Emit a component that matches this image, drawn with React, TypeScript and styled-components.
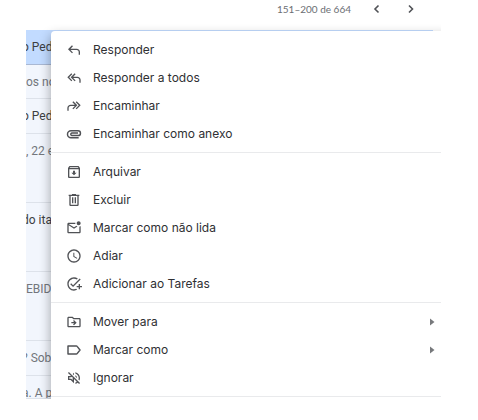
import React from "react";
import styled, { createGlobalStyle } from "styled-components";
import {
  MdAddTask,
  MdOutlineArchive,
  MdOutlineDriveFileMove,
  MdOutlineMarkEmailUnread,
  MdOutlineVolumeOff,
  MdSchedule,
} from "react-icons/md";

const Global = createGlobalStyle`
  * { box-sizing: border-box; }
  body { margin: 0; background: #fff; }
`;

const Page = styled.main`
  padding: 0 37px 21px 26px;
  font-family: Roboto, "Liberation Sans", sans-serif;
`;

const Viewport = styled.div`
  overflow: hidden;
`;

const Toolbar = styled.header`
  display: flex;
  align-items: center;
  justify-content: flex-end;
  height: 30px;
  padding: 0 24px 12px 0;
`;

const PageCount = styled.span`
  margin-right: 20px;
  font-family: Lato, "Liberation Sans", sans-serif;
  font-size: 10px;
  line-height: 16px;
  color: #6b6e73;
`;

const PagerButton = styled.button`
  display: flex;
  padding: 0;
  margin-left: 22px;
  border: 0;
  background: none;
  color: #505256;

  &:first-of-type {
    margin-left: 0;
  }
`;

const Content = styled.div`
  position: relative;
`;

const MailList = styled.ul`
  margin: 0;
  padding: 0;
  list-style: none;
`;

const MailRow = styled.li<{ $height: number; $selected?: boolean; $unread?: boolean }>`
  height: ${(p) => p.$height}px;
  margin-right: 8px;
  overflow: hidden;
  border-bottom: 1px solid ${(p) => (p.$selected ? "#a9b8d3" : "#dde2ea")};
  background: ${(p) => (p.$selected ? "#c2dbff" : "#f2f6fd")};
  color: ${(p) => (p.$unread ? "#3c3e42" : "#73767c")};
  font-size: 12px;
  line-height: 35px;
  white-space: nowrap;
`;

const Subject = styled.span<{ $scrolled?: boolean }>`
  display: block;
  margin-left: ${(p) => (p.$scrolled ? "-4px" : "0")};
`;

const Menu = styled.div`
  position: absolute;
  top: 1px;
  right: -8px;
  bottom: -8px;
  left: 25px;
  border-radius: 4px;
  background: #fff;
  box-shadow: 0 5px 11px 1px rgba(0, 0, 0, 0.3);
`;

const MenuGroup = styled.div`
  padding: 5px 0 4px;
  border-bottom: 1px solid #e9eaec;
`;

const MenuItem = styled.button`
  display: flex;
  align-items: center;
  width: 100%;
  height: 28px;
  padding: 0 11px 0 15px;
  border: 0;
  background: none;
  color: #2f3033;
  font-family: Inter, "Liberation Sans", sans-serif;
  font-size: 12px;
  line-height: 16px;
  text-align: left;

  > svg:first-child {
    flex: none;
    margin-right: 11px;
    color: #505256;
  }
`;

const ItemLabel = styled.span`
  flex: 1;
`;

const ICON = 16;

const Symbol = ({ d, flip }: { d: string; flip?: boolean }) => (
  <svg width={ICON} height={ICON} viewBox="0 -960 960 960" fill="currentColor" aria-hidden="true">
    <path d={d} transform={flip ? "translate(960 0) scale(-1 1)" : undefined} />
  </svg>
);

const REPLY =
  "M760-200v-160q0-50-35-85t-85-35H273l144 144-57 56-240-240 240-240 57 56-144 144h367q83 0 141.5 58.5T840-360v160h-80Z";
const REPLY_ALL =
  "M320-280 80-520l240-240 57 56-184 184 184 184-57 56Zm480 80v-160q0-50-35-85t-85-35H433l144 144-57 56-240-240 240-240 57 56-144 144h247q83 0 141.5 58.5T880-360v160h-80Z";

const LineIcon = ({ d }: { d: string }) => (
  <svg
    width={ICON}
    height={ICON}
    viewBox="0 0 24 24"
    fill="none"
    stroke="currentColor"
    strokeWidth="2.2"
    strokeLinejoin="round"
    aria-hidden="true"
  >
    <path d={d} />
  </svg>
);

const PAPERCLIP = "M19 17.5H7.5a5.25 5.25 0 0 1 0-10.5H18a3.7 3.7 0 0 1 0 7.4H8.7a2 2 0 0 1 0-3.9H18";
const LABEL = "M3 6h12.5a1.5 1.5 0 0 1 1.2.6L21 12l-4.3 5.4a1.5 1.5 0 0 1-1.2.6H3z";

const TrashIcon = () => (
  <svg width={ICON} height={ICON} viewBox="0 0 24 24" fill="currentColor" aria-hidden="true">
    <path d="M15 4V3H9v1H4v2h1v13c0 1.1.9 2 2 2h10c1.1 0 2-.9 2-2V6h1V4h-5zm2 15H7V6h10v13zM9 8h2v9H9V8zm4 0h2v9h-2V8z" />
  </svg>
);

const Chevron = ({ d }: { d: string }) => (
  <svg width="12" height="12" viewBox="0 0 12 12" fill="none" stroke="currentColor" strokeWidth="1.6" aria-hidden="true">
    <path d={d} />
  </svg>
);

const SubmenuArrow = () => (
  <svg width="12" height="12" viewBox="0 0 12 12" fill="#77797c" aria-hidden="true">
    <path d="M4 2.5v7L8.5 6z" />
  </svg>
);

type Item = { label: string; icon: React.ReactNode; submenu?: boolean };

const groups: Item[][] = [
  [
    { label: "Responder", icon: <Symbol d={REPLY} /> },
    { label: "Responder a todos", icon: <Symbol d={REPLY_ALL} /> },
    { label: "Encaminhar", icon: <Symbol d={REPLY_ALL} flip /> },
    { label: "Encaminhar como anexo", icon: <LineIcon d={PAPERCLIP} /> },
  ],
  [
    { label: "Arquivar", icon: <MdOutlineArchive size={ICON} /> },
    { label: "Excluir", icon: <TrashIcon /> },
    { label: "Marcar como não lida", icon: <MdOutlineMarkEmailUnread size={ICON} /> },
    { label: "Adiar", icon: <MdSchedule size={ICON} /> },
    { label: "Adicionar ao Tarefas", icon: <MdAddTask size={ICON} /> },
  ],
  [
    { label: "Mover para", icon: <MdOutlineDriveFileMove size={ICON} />, submenu: true },
    { label: "Marcar como", icon: <LineIcon d={LABEL} />, submenu: true },
    { label: "Ignorar", icon: <MdOutlineVolumeOff size={ICON} /> },
  ],
];

const mails = [
  { text: "o Ped", height: 35, scrolled: true, selected: true, unread: true },
  { text: "os no", height: 34 },
  { text: "o Ped", height: 35, scrolled: true, unread: true },
  { text: ", 22 e", height: 69 },
  { text: "do ita", height: 69, scrolled: true, unread: true },
  { text: "EBID", height: 69 },
  { text: "? Sob", height: 35, scrolled: true },
  { text: "a. A p", height: 23, scrolled: true },
];

export default function App() {
  return (
    <Page>
      <Global />
      <Viewport>
        <Toolbar>
          <PageCount>151–200 de 664</PageCount>
          <PagerButton aria-label="Mais recentes">
            <Chevron d="M7.5 2.5 4 6l3.5 3.5" />
          </PagerButton>
          <PagerButton aria-label="Mais antigas">
            <Chevron d="M4 2.5 7.5 6 4 9.5" />
          </PagerButton>
        </Toolbar>
        <Content>
          <MailList>
            {mails.map((mail, i) => (
              <MailRow key={i} $height={mail.height} $selected={mail.selected} $unread={mail.unread}>
                <Subject $scrolled={mail.scrolled}>{mail.text}</Subject>
              </MailRow>
            ))}
          </MailList>
          <Menu role="menu">
            {groups.map((items, i) => (
              <MenuGroup key={i} role="group">
                {items.map((item) => (
                  <MenuItem key={item.label} role="menuitem">
                    {item.icon}
                    <ItemLabel>{item.label}</ItemLabel>
                    {item.submenu && <SubmenuArrow />}
                  </MenuItem>
                ))}
              </MenuGroup>
            ))}
          </Menu>
        </Content>
      </Viewport>
    </Page>
  );
}
